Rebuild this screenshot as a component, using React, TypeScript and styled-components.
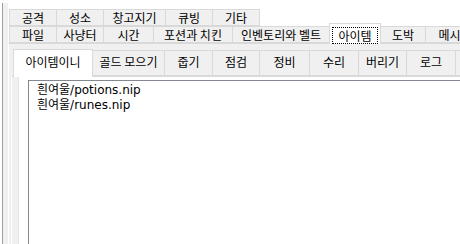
import React from "react";
import styled, { createGlobalStyle } from "styled-components";

const Global = createGlobalStyle`
  html, body { margin: 0; padding: 0; background: #ffffff; }
  body { width: 460px; height: 244px; overflow: hidden; }
  #root { width: 460px; height: 244px; overflow: hidden; }
`;

const FONT = `"Noto Sans CJK KR", "Noto Sans", sans-serif`;
const LIST_FONT = `"DejaVu Sans", "Noto Sans CJK KR", sans-serif`;

const Screen = styled.div`
  width: 460px;
  height: 244px;
  overflow: hidden;
  background: #ffffff;
  font-family: ${FONT};
  font-size: 12px;
  color: #000;
  display: flex;
  padding-left: 2px;
  box-sizing: border-box;
`;

const Frame = styled.div`
  margin-top: 3px;
  border-left: 1px solid #a0a0a0;
  background: #f0f0f0;
  padding-left: 5px;
  display: flex;
  flex-direction: column;
  flex: 1 0 auto;
  min-width: 560px;
`;

const OuterHeader = styled.div`
  background: #ffffff;
  padding: 6px 0 0 1px;
  display: flex;
  flex-direction: column;
  position: relative;
  z-index: 2;
`;

const TabRow = styled.div`
  display: flex;
  height: 17px;
  align-items: flex-end;
`;

const Tab = styled.div<{ $w: number; $selected?: boolean }>`
  position: relative;
  box-sizing: border-box;
  width: ${(p) => p.$w}px;
  flex: 0 0 auto;
  height: ${(p) => (p.$selected ? 21 : 17)}px;
  margin-bottom: ${(p) => (p.$selected ? -1 : 0)}px;
  background: ${(p) => (p.$selected ? "#ffffff" : "#f0f0f0")};
  border: 1px solid #d9d9d9;
  border-bottom: ${(p) => (p.$selected ? "none" : "1px solid #d9d9d9")};
  margin-right: -1px;
  display: flex;
  align-items: center;
  justify-content: center;
  line-height: 14px;
  white-space: nowrap;
  z-index: ${(p) => (p.$selected ? 3 : 1)};
  padding-top: ${(p) => (p.$selected ? 2 : 0)}px;
`;

const FocusBox = styled.span`
  outline: 1px dotted #000;
  padding: 1px 5px 0;
  line-height: 14px;
`;

const OuterPanel = styled.div`
  flex: 1;
  border-top: 1px solid #d9d9d9;
  border-left: 1px solid #ffffff;
  background: #f0f0f0;
  padding: 5px 0 0 2px;
  display: flex;
  flex-direction: column;
`;

const InnerHeader = styled.div`
  display: flex;
  align-items: flex-end;
  height: 27px;
  padding-left: 2px;
  position: relative;
  z-index: 2;
`;

const InnerTab = styled.div<{ $w: number; $selected?: boolean }>`
  box-sizing: border-box;
  width: ${(p) => p.$w}px;
  flex: 0 0 auto;
  height: ${(p) => (p.$selected ? 28 : 26)}px;
  margin-bottom: ${(p) => (p.$selected ? -1 : 0)}px;
  background: ${(p) => (p.$selected ? "#ffffff" : "#f0f0f0")};
  border: 1px solid #d9d9d9;
  border-bottom: ${(p) => (p.$selected ? "none" : "1px solid #d9d9d9")};
  margin-right: -1px;
  display: flex;
  align-items: center;
  justify-content: center;
  white-space: nowrap;
  padding-bottom: 4px;
  z-index: ${(p) => (p.$selected ? 3 : 1)};
`;

const InnerPanel = styled.div`
  flex: 1;
  display: flex;
  border-top: 1px solid #d9d9d9;
  border-left: 1px solid #ffffff;
  background: #f0f0f0;
  padding-left: 6px;
`;

const Content = styled.div`
  flex: 1;
  background: #ffffff;
  border-left: 1px solid #e6e6e6;
  padding: 3px 0 0 9px;
  display: flex;
`;

const ListBox = styled.div`
  flex: 1;
  border-top: 1px solid #828790;
  border-left: 1px solid #828790;
  background: #ffffff;
  padding: 2px 0 0 8px;
  font-family: ${LIST_FONT};
`;

const Item = styled.div`
  height: 15px;
  line-height: 15px;
  white-space: nowrap;
`;

const row1 = [
  { t: "공격", w: 48 },
  { t: "성소", w: 48 },
  { t: "창고지기", w: 63 },
  { t: "큐빙", w: 48 },
  { t: "기타", w: 48 },
];

const row2 = [
  { t: "파일", w: 48 },
  { t: "사냥터", w: 48 },
  { t: "시간", w: 51 },
  { t: "포션과 치킨", w: 80 },
  { t: "인벤토리와 벨트", w: 98 },
  { t: "아이템", w: 52, sel: true },
  { t: "도박", w: 46 },
  { t: "메시지", w: 60 },
];

const inner = [
  { t: "아이템이니", w: 80, sel: true },
  { t: "골드 모으기", w: 73 },
  { t: "줍기", w: 49 },
  { t: "점검", w: 48 },
  { t: "정비", w: 51 },
  { t: "수리", w: 50 },
  { t: "버리기", w: 49 },
  { t: "로그", w: 50 },
  { t: "", w: 60 },
];

export default function App() {
  return (
    <>
      <Global />
      <Screen>
        <Frame>
          <OuterHeader>
            <TabRow>
              {row1.map((r) => (
                <Tab key={r.t} $w={r.w}>
                  {r.t}
                </Tab>
              ))}
            </TabRow>
            <TabRow>
              {row2.map((r) => (
                <Tab key={r.t} $w={r.w} $selected={r.sel}>
                  {r.sel ? <FocusBox>{r.t}</FocusBox> : r.t}
                </Tab>
              ))}
            </TabRow>
          </OuterHeader>
          <OuterPanel>
            <InnerHeader>
              {inner.map((r, i) => (
                <InnerTab key={i} $w={r.w} $selected={r.sel}>
                  {r.t}
                </InnerTab>
              ))}
            </InnerHeader>
            <InnerPanel>
              <Content>
                <ListBox>
                  <Item>흰여울/potions.nip</Item>
                  <Item>흰여울/runes.nip</Item>
                </ListBox>
              </Content>
            </InnerPanel>
          </OuterPanel>
        </Frame>
      </Screen>
    </>
  );
}
